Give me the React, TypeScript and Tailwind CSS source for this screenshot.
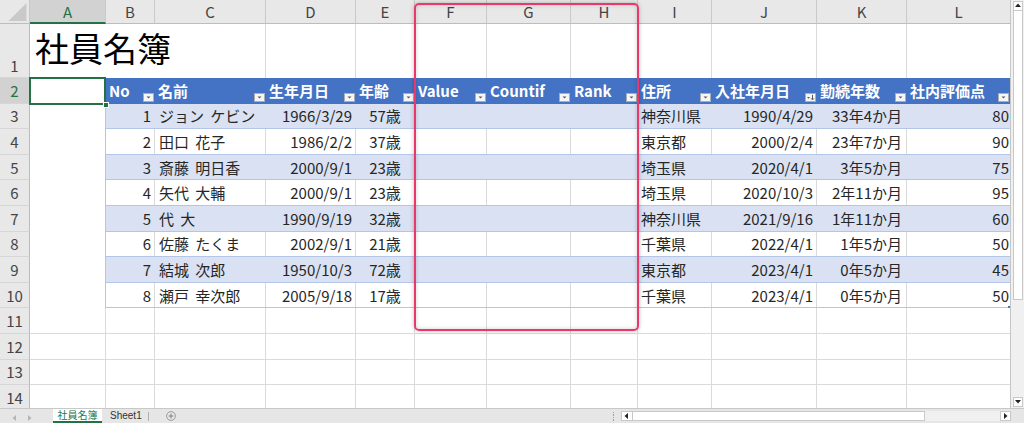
import React from "react";

type Col = { w: string; h: string; cell: string };

const cols: Col[] = [
  { w: "w-[49px]", h: "No", cell: "justify-end pr-[3px]" },
  { w: "w-[111px]", h: "名前", cell: "justify-start pl-[4px]" },
  { w: "w-[90px]", h: "生年月日", cell: "justify-end pr-[3px]" },
  { w: "w-[59px]", h: "年齢", cell: "justify-center" },
  { w: "w-[72px]", h: "Value", cell: "justify-start" },
  { w: "w-[84px]", h: "Countif", cell: "justify-start" },
  { w: "w-[67px]", h: "Rank", cell: "justify-start" },
  { w: "w-[74px]", h: "住所", cell: "justify-start pl-[3px]" },
  { w: "w-[105px]", h: "入社年月日", cell: "justify-end pr-[3px]" },
  { w: "w-[90px]", h: "勤続年数", cell: "justify-end pr-[4px]" },
  { w: "w-[103px]", h: "社内評価点", cell: "justify-end pr-[1px]" },
];

const letters = [
  { l: "A", w: "w-[76px]" },
  { l: "B", w: "w-[49px]" },
  { l: "C", w: "w-[111px]" },
  { l: "D", w: "w-[90px]" },
  { l: "E", w: "w-[59px]" },
  { l: "F", w: "w-[72px]" },
  { l: "G", w: "w-[84px]" },
  { l: "H", w: "w-[67px]" },
  { l: "I", w: "w-[74px]" },
  { l: "J", w: "w-[105px]" },
  { l: "K", w: "w-[90px]" },
  { l: "L", w: "w-[103px]" },
];

const rows: string[][] = [
  ["1", "ジョン ケビン", "1966/3/29", "57歳", "", "", "", "神奈川県", "1990/4/29", "33年4か月", "80"],
  ["2", "田口 花子", "1986/2/2", "37歳", "", "", "", "東京都", "2000/2/4", "23年7か月", "90"],
  ["3", "斎藤 明日香", "2000/9/1", "23歳", "", "", "", "埼玉県", "2020/4/1", "3年5か月", "75"],
  ["4", "矢代 大輔", "2000/9/1", "23歳", "", "", "", "埼玉県", "2020/10/3", "2年11か月", "95"],
  ["5", "代 大", "1990/9/19", "32歳", "", "", "", "神奈川県", "2021/9/16", "1年11か月", "60"],
  ["6", "佐藤 たくま", "2002/9/1", "21歳", "", "", "", "千葉県", "2022/4/1", "1年5か月", "50"],
  ["7", "結城 次郎", "1950/10/3", "72歳", "", "", "", "東京都", "2023/4/1", "0年5か月", "45"],
  ["8", "瀬戸 幸次郎", "2005/9/18", "17歳", "", "", "", "千葉県", "2023/4/1", "0年5か月", "50"],
];

function RowHdr({ n, sel, bottom }: { n: number; sel?: boolean; bottom?: boolean }) {
  return (
    <div
      className={`w-[30px] shrink-0 border-r border-r-[#bcbcbc] border-b border-b-[#d6d6d6] flex justify-center text-[15px] leading-none ${
        bottom ? "items-end pb-[4px]" : "items-center"
      } ${sel ? "bg-[#d2d2d2] text-[#217346]" : "bg-[#e8e8e8] text-[#444444]"}`}
    >
      {n}
    </div>
  );
}

function DD({ sort }: { sort?: boolean }) {
  return (
    <div className="absolute right-[1px] bottom-[2px] w-[11px] h-[9px] bg-[#f6f6f6] border border-[#adadad] flex items-center justify-center">
      <svg width="9" height="7" viewBox="0 0 9 7">
        {sort ? (
          <>
            <polygon points="1,3 4,3 2.5,4.8" fill="#5a5a5a" />
            <line x1="6.5" y1="0.8" x2="6.5" y2="5.5" stroke="#5a5a5a" strokeWidth="1" />
            <polyline points="5,4.3 6.5,6 8,4.3" fill="none" stroke="#5a5a5a" strokeWidth="0.9" />
          </>
        ) : (
          <polygon points="2.5,2.5 6.5,2.5 4.5,4.6" fill="#5a5a5a" />
        )}
      </svg>
    </div>
  );
}

function Tri({ dir, color }: { dir: "up" | "down" | "left" | "right"; color: string }) {
  const pts =
    dir === "up" ? "1,5 7,5 4,1.5" : dir === "down" ? "1,2 7,2 4,5.5" : dir === "left" ? "5,1 5,7 1.5,4" : "2,1 2,7 5.5,4";
  return (
    <svg width="8" height="8" viewBox="0 0 8 8">
      <polygon points={pts} fill={color} />
    </svg>
  );
}

export default function App() {
  return (
    <div className="w-[1024px] h-[423px] overflow-hidden bg-white flex flex-col font-['Noto_Sans_CJK_JP','Noto_Sans',sans-serif] select-none">
      <div className="flex h-[408px] shrink-0">
        <div className="relative w-[1010px] h-[408px] overflow-hidden">
          {/* column header */}
          <div className="flex h-[24px]">
            <div className="w-[30px] shrink-0 bg-[#e8e8e8] border-r border-r-[#c6c6c6] border-b border-b-[#bdbdbd]">
              <svg width="29" height="23" viewBox="0 0 29 23">
                <polygon points="26.5,3 26.5,21 8.5,21" fill="#c9c9c9" />
              </svg>
            </div>
            {letters.map((c, i) => (
              <div
                key={c.l}
                className={`${c.w} shrink-0 flex items-center justify-center text-[15px] leading-none border-r border-r-[#c9c9c9] ${
                  i === 0
                    ? "bg-[#d2d2d2] text-[#217346] border-b-2 border-b-[#217346]"
                    : "bg-[#e8e8e8] text-[#444444] border-b border-b-[#bdbdbd]"
                } ${i === letters.length - 1 ? "border-r-0" : ""}`}
              >
                {c.l}
              </div>
            ))}
          </div>

          {/* row 1 */}
          <div className="flex h-[54px]">
            <RowHdr n={1} bottom />
            <div className="w-[236px] shrink-0 border-r border-r-[#dadada] pl-[5px] pt-[7px] text-[34px] leading-none text-black whitespace-nowrap">
              社員名簿
            </div>
            {letters.slice(3).map((c, i) => (
              <div
                key={c.l}
                className={`${c.w} shrink-0 ${i === letters.length - 4 ? "" : "border-r border-r-[#dadada]"}`}
              />
            ))}
          </div>

          {/* row 2 : table header */}
          <div className="flex h-[25.6px]">
            <RowHdr n={2} sel />
            <div className="relative w-[76px] shrink-0 bg-white">
              <div className="absolute -left-[1px] -top-[1px] right-0 -bottom-[1px] border-2 border-[#217346] z-10" />
              <div className="absolute -right-[3px] -bottom-[4px] w-[6px] h-[6px] bg-[#217346] border border-white z-10" />
            </div>
            <div className="flex flex-1 bg-[#4472c4]">
              {cols.map((c, j) => (
                <div
                  key={c.h}
                  className={`${c.w} shrink-0 relative flex items-center pl-[3px] text-[15px] font-bold leading-none text-white whitespace-nowrap`}
                >
                  {c.h}
                  <DD sort={j === 8} />
                </div>
              ))}
            </div>
          </div>

          {/* data rows */}
          {rows.map((r, i) => {
            const band = i % 2 === 0;
            return (
              <div key={i} className="flex h-[25.6px]">
                <RowHdr n={i + 3} />
                <div className="w-[76px] shrink-0 bg-white border-r border-r-[#b4c6e7]" />
                <div
                  className={`relative flex flex-1 border-b border-b-[#b4c6e7] ${band ? "bg-[#d9e1f2]" : "bg-white"}`}
                >
                  {cols.map((c, j) => (
                    <div
                      key={j}
                      className={`${c.w} ${c.cell} shrink-0 flex items-center text-[15px] leading-none text-[#262626] whitespace-nowrap [word-spacing:3px] ${
                        j < cols.length - 1 ? (band ? "border-r border-r-transparent" : "border-r border-r-[#dadada]") : ""
                      }`}
                    >
                      {r[j]}
                    </div>
                  ))}
                  {i === rows.length - 1 && (
                    <div className="absolute right-0 bottom-[-1px] w-[2px] h-[2px] bg-[#4472c4]" />
                  )}
                </div>
              </div>
            );
          })}

          {/* empty rows */}
          {[11, 12, 13, 14].map((n) => (
            <div key={n} className="flex h-[25.6px]">
              <RowHdr n={n} />
              {letters.map((c, i) => (
                <div
                  key={c.l}
                  className={`${c.w} shrink-0 bg-white border-b border-b-[#dadada] ${
                    i === letters.length - 1 ? "" : "border-r border-r-[#dadada]"
                  }`}
                />
              ))}
            </div>
          ))}

          {/* highlight rectangle */}
          <div className="absolute left-[414px] top-[3px] w-[225px] h-[328px] border-2 border-[#ea386d] rounded-[5px] z-20 shadow-[0_0_4px_rgba(0,0,0,0.25),inset_0_0_4px_rgba(0,0,0,0.18)]" />
        </div>

        {/* vertical scrollbar */}
        <div className="w-[14px] h-[408px] shrink-0 bg-[#f0f0f0] border-l border-l-[#c6c6c6] flex flex-col items-center">
          <div className="mt-[1px] w-[10px] h-[10px] bg-white border border-[#c8c8c8] flex items-center justify-center">
            <Tri dir="up" color="#222" />
          </div>
          <div className="w-[10px] h-[289px] bg-white border border-[#c8c8c8] border-t-0" />
          <div className="flex-1" />
          <div className="mb-[1px] w-[10px] h-[10px] bg-white border border-[#c8c8c8] flex items-center justify-center">
            <Tri dir="down" color="#222" />
          </div>
        </div>
      </div>

      {/* tab bar */}
      <div className="h-[15px] shrink-0 flex bg-[#e6e6e6] border-t border-t-[#c8c8c8]">
        <div className="w-[53px] shrink-0 flex items-center pl-[11px] gap-[7px] pt-[3px]">
          <Tri dir="left" color="#b5b5b5" />
          <Tri dir="right" color="#b5b5b5" />
        </div>
        <div className="w-[49px] shrink-0 bg-white border-b-2 border-b-[#217346] flex items-center justify-center text-[10px] leading-none text-[#217346]">
          社員名簿
        </div>
        <div className="w-[46px] shrink-0 flex items-center pl-[8px] text-[10px] leading-none text-[#333] font-['Liberation_Sans',sans-serif]">
          Sheet1
        </div>
        <div className="w-[1px] shrink-0 flex items-center">
          <div className="w-[1px] h-[9px] bg-[#b0b0b0]" />
        </div>
        <div className="w-[17px] shrink-0" />
        <div className="w-[10px] shrink-0 flex items-center">
          <svg width="10" height="10" viewBox="0 0 10 10">
            <circle cx="5" cy="5" r="4.4" fill="none" stroke="#8a8a8a" strokeWidth="0.8" />
            <line x1="2.6" y1="5" x2="7.4" y2="5" stroke="#6a6a6a" strokeWidth="0.8" />
            <line x1="5" y1="2.6" x2="5" y2="7.4" stroke="#6a6a6a" strokeWidth="0.8" />
          </svg>
        </div>
        <div className="flex-1" />
        <div className="w-[11px] shrink-0 flex flex-col items-center justify-center gap-[1px] pr-[4px]">
          <div className="w-[1.5px] h-[1.5px] bg-[#a0a0a0]" />
          <div className="w-[1.5px] h-[1.5px] bg-[#a0a0a0]" />
          <div className="w-[1.5px] h-[1.5px] bg-[#a0a0a0]" />
          <div className="w-[1.5px] h-[1.5px] bg-[#a0a0a0]" />
        </div>
        <div className="w-[390px] shrink-0 flex mt-[2px] h-[10px] bg-[#f0f0f0]">
          <div className="w-[12px] shrink-0 bg-white border border-[#c8c8c8] flex items-center justify-center">
            <Tri dir="left" color="#222" />
          </div>
          <div className="w-[292px] shrink-0 bg-white border border-[#c8c8c8] border-l-0" />
          <div className="flex-1" />
          <div className="w-[11px] shrink-0 bg-white border border-[#c8c8c8] flex items-center justify-center">
            <Tri dir="right" color="#222" />
          </div>
        </div>
        <div className="w-[13px] shrink-0" />
      </div>
    </div>
  );
}
